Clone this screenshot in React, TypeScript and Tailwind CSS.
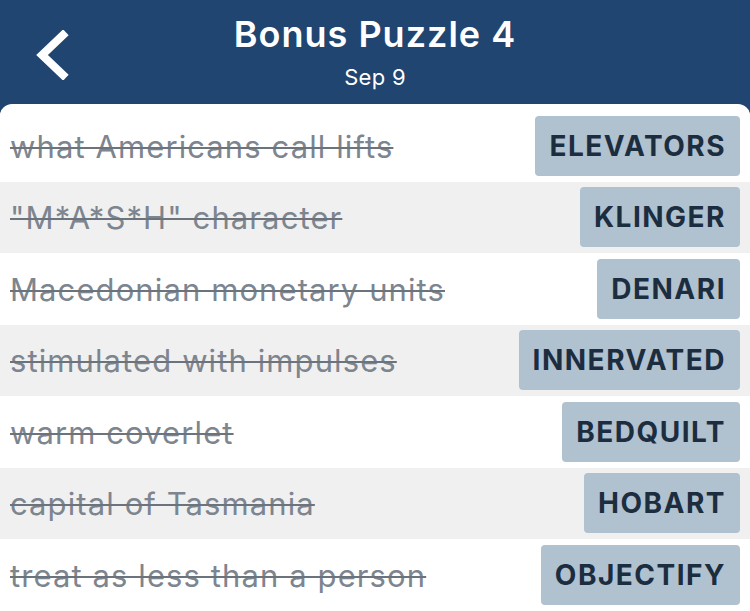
const rows = [
  { clue: "what Americans call lifts", answer: "ELEVATORS" },
  { clue: "\"M*A*S*H\" character", answer: "KLINGER" },
  { clue: "Macedonian monetary units", answer: "DENARI" },
  { clue: "stimulated with impulses", answer: "INNERVATED" },
  { clue: "warm coverlet", answer: "BEDQUILT" },
  { clue: "capital of Tasmania", answer: "HOBART" },
  { clue: "treat as less than a person", answer: "OBJECTIFY" },
];

const App = () => {
  return (
    <div className="w-[750px] h-[611px] overflow-hidden bg-[#1f4570] font-['Inter',sans-serif]">
      <div className="relative h-[104px] flex flex-col items-center pt-[10px]">
        <svg
          className="absolute left-[33px] top-[30px]"
          width="36"
          height="50"
          viewBox="0 0 36 50"
        >
          <path d="M30 5 L9 25 L30 45" stroke="#fff" strokeWidth="8" fill="none" strokeLinecap="square" />
        </svg>
        <h1 className="text-white text-[36px] font-semibold leading-[48px] tracking-[1px]">Bonus Puzzle 4</h1>
        <p className="text-white text-[22px] leading-[28px] mt-[5px] tracking-[0.3px]">Sep 9</p>
      </div>

      <div className="bg-white rounded-t-[12px] pt-[6px] overflow-hidden">
        {rows.map((r, i) => (
          <div
            key={r.answer}
            className={`flex items-center justify-between h-[71.5px] pl-[10px] pr-[10px] ${
              i % 2 === 1 ? "bg-[#f0f0f0]" : "bg-white"
            }`}
          >
            <span className="text-[31px] text-[#7d858f] line-through decoration-[#6b737d] decoration-2 tracking-[1.1px] whitespace-nowrap pt-[2px]">
              {r.clue}
            </span>
            <span className="bg-[#b0c1cf] rounded-[4px] h-[60px] flex items-center px-[14px] text-[28px] font-bold text-[#1d2d40] tracking-[1.5px]">
              {r.answer}
            </span>
          </div>
        ))}
      </div>
    </div>
  );
};

export default App;
